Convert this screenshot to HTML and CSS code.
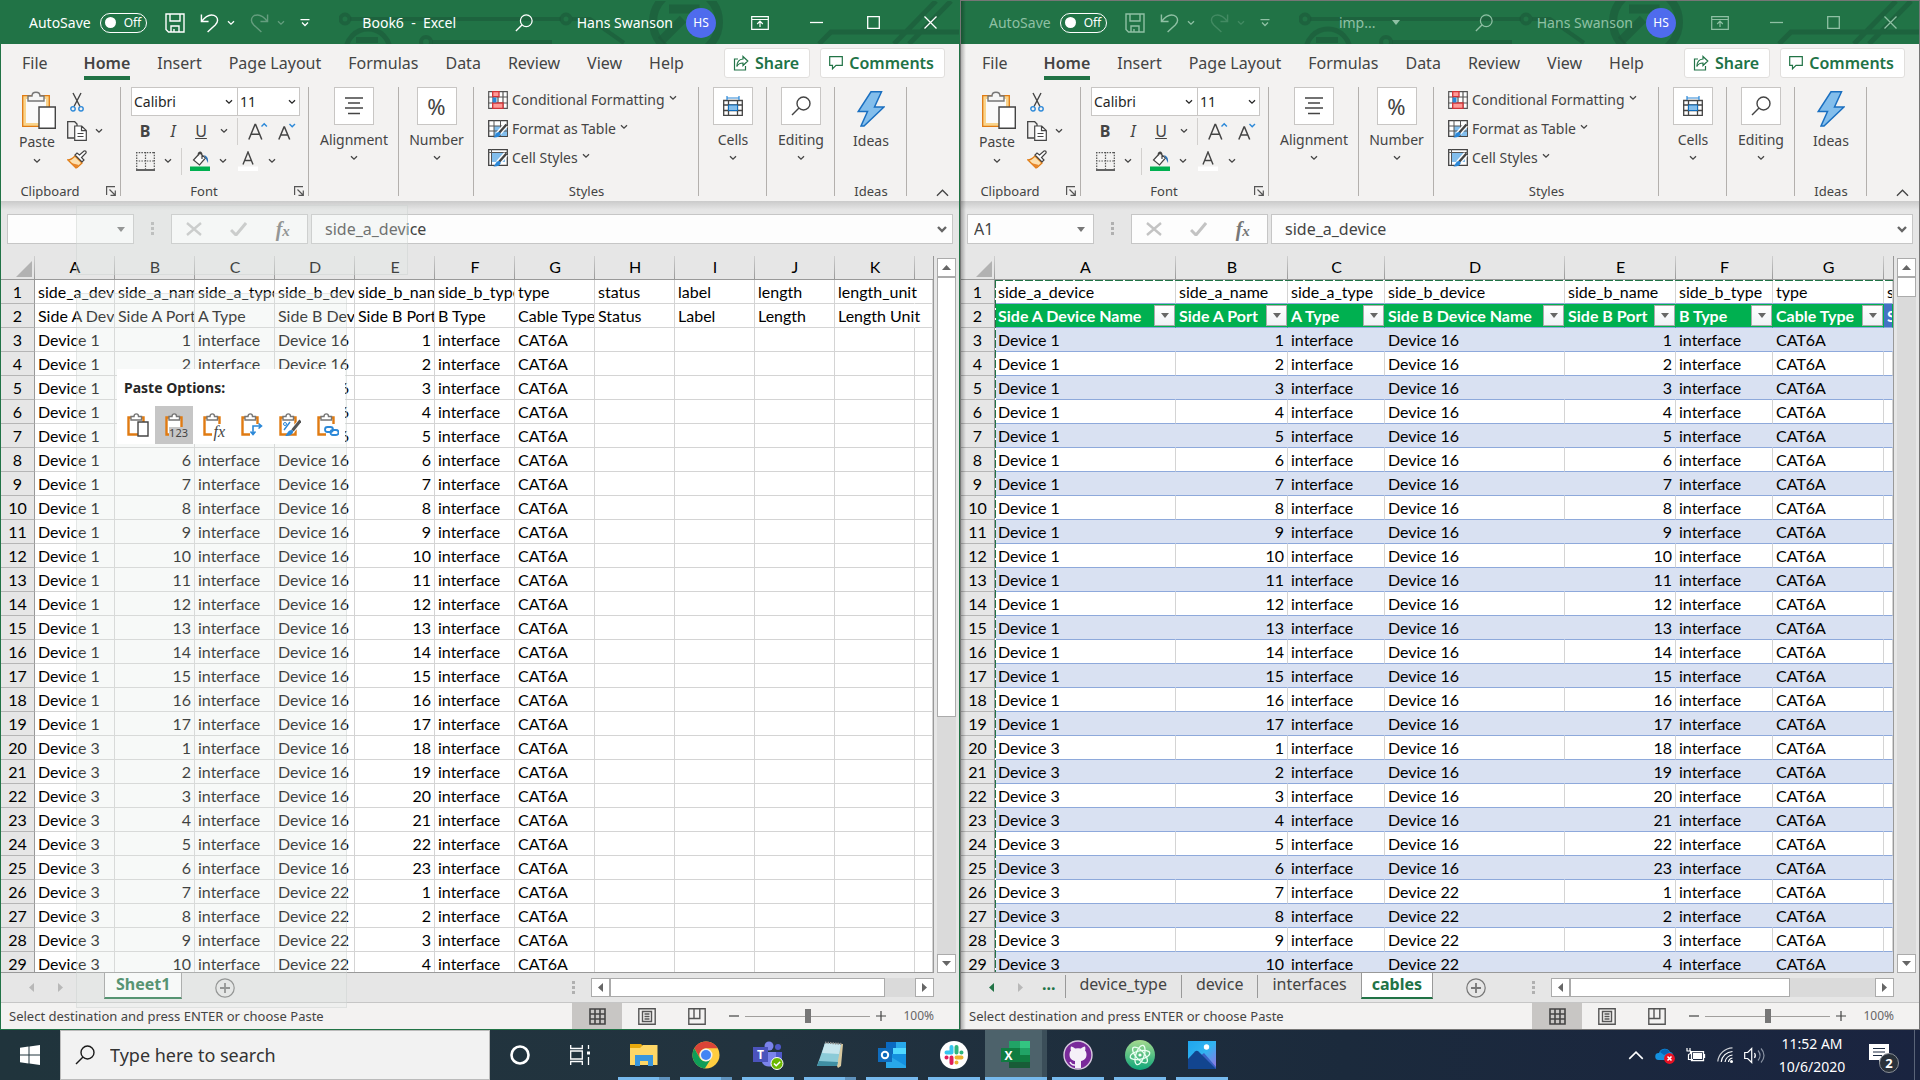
FILE: index.html
```html
<!DOCTYPE html>
<html lang="en">
<head>
<meta charset="utf-8">
<title>Book6 - Excel</title>
<link rel="stylesheet" href="styles.css">
</head>
<body>
<svg class="sprite" aria-hidden="true">
  <symbol id="chev" viewBox="0 0 8 6"><path d="M1 1.2 4 4.2 7 1.2" fill="none" stroke="currentColor" stroke-width="1.3"/></symbol>
  <symbol id="tri" viewBox="0 0 8 5"><path d="M0 0h8L4 5z" fill="currentColor"/></symbol>
  <symbol id="save" viewBox="0 0 20 20"><path d="M1 1h18v18H3.500L1 16.500zM5 1v7h10V1M6 19v-6h8v6M9 16v3" fill="none" stroke="currentColor" stroke-width="1.4"/></symbol>
  <symbol id="undo" viewBox="0 0 20 20"><path d="M1.500 1v7.500H9M1.500 8.500C5 4 8 1.500 12 1.500c4 0 6.500 2.500 6.500 5.500 0 2-1 3.500-2.500 5L8 19.500" fill="none" stroke="currentColor" stroke-width="1.5"/></symbol>
  <symbol id="customize" viewBox="0 0 10 8"><path d="M.5.700h9M2 3.500l3 3 3-3" fill="none" stroke="currentColor" stroke-width="1.3"/></symbol>
  <symbol id="search" viewBox="0 0 20 20"><circle cx="12.500" cy="7.500" r="6.500" fill="none" stroke="currentColor" stroke-width="1.400"/><path d="M8 12 1 19" stroke="currentColor" stroke-width="1.500"/></symbol>
  <symbol id="display" viewBox="0 0 18 14"><path d="M.7.700h16.600v12.600H.700zM.7 3.500h16.600M9 11V5.500M6.200 8 9 5.200 11.800 8" fill="none" stroke="currentColor" stroke-width="1.200"/></symbol>
  <symbol id="share" viewBox="0 0 16 16"><path d="M5 4H1.500v11h11v-4M10 1.500 14.800 6 10 10.500V8C7 8 5 9 3.800 11.500 4 7 6.500 4.300 10 4z" fill="none" stroke="currentColor" stroke-width="1.200"/></symbol>
  <symbol id="comment" viewBox="0 0 14 14"><path d="M.7.700h12.600v8.600H7L3.500 12.800V9.300H.700z" fill="none" stroke="currentColor" stroke-width="1.200"/></symbol>
  <symbol id="paste" viewBox="0 0 34 38">
    <path d="M2 6h24v28H2z" fill="#fafafa" stroke="#f9d48c" stroke-width="4"/><path d="M.700 4.700h26.600v30.600H.700z" fill="none" stroke="#e07b12" stroke-width="1.300"/>
    <path d="M6 10V5h4c0-5 8-5 8 0h4v5z" fill="#f5f5f5" stroke="#767676" stroke-width="1.400"/>
    <path d="M17 16h16.300v21.300H17z" fill="#fff" stroke="#444" stroke-width="1.400"/></symbol>
  <symbol id="cut" viewBox="0 0 14 20"><path d="M3 1l7 13.500M11 1 4 14.500" stroke="#444" stroke-width="1.400"/><circle cx="3" cy="16.800" r="2.200" fill="none" stroke="#2b88d8" stroke-width="1.400"/><circle cx="11" cy="16.800" r="2.200" fill="none" stroke="#2b88d8" stroke-width="1.400"/></symbol>
  <symbol id="copy" viewBox="0 0 20 20"><path d="M7 17H.7V.700h7L10 3v2" fill="none" stroke="#444" stroke-width="1.300"/><path d="M7.700 5h7l4.600 4.500v9.800H7.700zM14.500 5v4.700h4.700M10.500 12.500h6M10.500 15.500h6" fill="#fff" stroke="#444" stroke-width="1.200"/></symbol>
  <symbol id="brush" viewBox="0 0 20 19"><path d="m8 6 7 7c-2 2-4 4-6 5L1 10c3 0 5-2 7-4z" fill="#fce0b0" stroke="#e07b12" stroke-width="1.300"/><path d="m4 13 8 2-3 3z" fill="#e8862a"/><path d="m8 5 7 7 2-2-2.500-2.500L19 3c.5-1.500-.5-2.500-2-2l-4.500 4L10 3z" fill="#fff" stroke="#444" stroke-width="1.200"/></symbol>
  <symbol id="launch" viewBox="0 0 10 10"><path d="M.600 9V.600H9M3.500 3.500l5.500 5.500M9.300 4.500v4.800H4.500" fill="none" stroke="#555" stroke-width="1.200"/></symbol>
  <symbol id="grow" viewBox="0 0 20 18"><path d="M.800 17.500 7 2.500h.600l6.200 15M3 12.200h8.600" fill="none" stroke="#444" stroke-width="1.500"/><path d="m13.500 4.500 2.700-2.700 2.700 2.700" fill="none" stroke="#2b88d8" stroke-width="1.400"/></symbol>
  <symbol id="shrink" viewBox="0 0 20 18"><path d="M1.800 17.500 7 5h.500l5.200 12.500M3.500 13h7.300" fill="none" stroke="#444" stroke-width="1.500"/><path d="m12.500 2 2.700 2.700L18 2" fill="none" stroke="#2b88d8" stroke-width="1.400"/></symbol>
  <symbol id="borders" viewBox="0 0 19 19"><path d="M.700 0v17M9.500 0v17M18.300 0v17M0 .700h19M0 9h19" fill="none" stroke="#555" stroke-width="1.200" stroke-dasharray="1.500 1.200"/><path d="M0 18h19" stroke="#333" stroke-width="1.500"/></symbol>
  <symbol id="fill" viewBox="0 0 20 20"><path d="M10 2 3.500 9l6 5 6-7zM8 5c0-5 4-5 4-1v4" fill="#fff" stroke="#444" stroke-width="1.200"/><path d="M14 4c3 1 4.500 3 4 8l-2-4z" fill="#2b72b8"/><path d="M0 15.500h20V20H0z" fill="#00b050"/></symbol>
  <symbol id="fontcolor" viewBox="0 0 20 20"><path d="M5 13.500 10 1l5 12.500M6.800 9.500h6.400" fill="none" stroke="#444" stroke-width="1.400"/><path d="M0 15.500h20V20H0z" fill="#fff"/></symbol>
  <symbol id="align" viewBox="0 0 18 18"><path d="M0 1h18M3 6h12M0 11h18M3 16.500h12" stroke="#444" stroke-width="1.300"/></symbol>
  <symbol id="condfmt" viewBox="0 0 20 18"><path d="M.700.700h18.600v16.600H.700zM5 0v18M10 0v18M15 0v18M0 6h20M0 12h20" fill="#fff" stroke="#555" stroke-width="1.200"/><path d="M4.700.700H11v5H4.700zM4.700 12H15v5.300H4.700z" fill="#ff9a96" stroke="#d13438" stroke-width="1.300"/><path d="M4.700 6.500h3.800v5H4.700z" fill="#2b88d8"/></symbol>
  <symbol id="fmttable" viewBox="0 0 20 18"><path d="M.700.700h18.600v15.600H.700z" fill="#fff" stroke="#444" stroke-width="1.300"/><path d="M6 6h13v10H6z" fill="#83beec"/><path d="M6 0v16M12.500 0v16M0 6h20M0 11h20" stroke="#555"/><path d="m18 5-8 9" stroke="#fff" stroke-width="5"/><path d="m18.500 4.500-7.500 8.500" stroke="#444" stroke-width="2.400"/><path d="M11 12c2 1 2 2 1 3.500-1.500 2-5 2-7 2 2.500-.5 2-5 6-5.500z" fill="#2b88d8"/></symbol>
  <symbol id="cellstyles" viewBox="0 0 20 18"><path d="M.700.700h18.600v15.600H.700z" fill="#fff" stroke="#444" stroke-width="1.300"/><path d="M4 4h13v9H4z" fill="#83beec"/><path d="M3.500 0v16M0 3.500h20" stroke="#555"/><path d="m18 5-8 9" stroke="#fff" stroke-width="5"/><path d="m18.500 4.500-7.500 8.500" stroke="#444" stroke-width="2.400"/><path d="M11 12c2 1 2 2 1 3.500-1.500 2-5 2-7 2 2.500-.5 2-5 6-5.500z" fill="#2b88d8"/></symbol>
  <symbol id="cells" viewBox="0 0 20 20"><path d="M.700 4.500h18.600v14.800H.700zM5.500 4v16M14.500 4v16M0 9h20M0 14.500h20" fill="none" stroke="#444" stroke-width="1.300"/><path d="M5.500 9h9v5.500h-9z" fill="#83beec" stroke="#106ebe"/><path d="M4 2h12M4 0v4M16 0v4" stroke="#2b88d8" stroke-width="1.200"/></symbol>
  <symbol id="bolt" viewBox="0 0 28 36"><path d="M14 .800h10.500L17.500 16H27L7 35H4l6.500-14.500H1.200z" fill="#83beec" stroke="#1a6fc0" stroke-width="1.500"/></symbol>
  <symbol id="caret" viewBox="0 0 14 8"><path d="m1 7 6-6 6 6" fill="none" stroke="currentColor" stroke-width="1.400"/></symbol>
  <symbol id="plus" viewBox="0 0 20 20"><circle cx="10" cy="10" r="9.200" fill="none" stroke="#777" stroke-width="1.200"/><path d="M10 5v10M5 10h10" stroke="#777" stroke-width="1.800"/></symbol>
  <symbol id="v-normal" viewBox="0 0 17 17"><path d="M1 1h15v15H1zM6 1v15M11 1v15M1 6h15M1 11h15" fill="none" stroke="#444" stroke-width="1.600"/></symbol>
  <symbol id="v-page" viewBox="0 0 18 17"><path d="M.800.800h16.400v15.400H.800zM4.500 3.500h9v10h-9zM6.500 6h5M6.500 8.500h5M6.500 11h5" fill="none" stroke="#555" stroke-width="1.400"/></symbol>
  <symbol id="v-break" viewBox="0 0 18 17"><path d="M.800.800h16.400v15.400H.800zM.800 10.500h11V.800M6 .800v9.700" fill="none" stroke="#555" stroke-width="1.400"/></symbol>
  <symbol id="clip" viewBox="0 0 22 24"><path d="M1.500 4.500h15v17h-15z" fill="#fff" stroke="#e07b12" stroke-width="2.400"/><path d="M4 7V3.500h3C7 0 11.500 0 11.500 3.500h3V7z" fill="#fff" stroke="#767676" stroke-width="1.400"/></symbol>
  <symbol id="clip-fx" viewBox="0 0 22 24"><use href="#clip" width="22" height="24"/><path d="M9 11h13v13H9z" fill="#fff"/></symbol>
</svg>

<main class="desktop" id="desktop"></main>

<template id="window-template">
  <section class="window">
    <header class="titlebar">
      <svg class="circuit" viewBox="0 0 620 43" aria-hidden="true"><g fill="none" stroke="#1b5b3a" stroke-opacity=".65" stroke-width="4">
        <circle cx="6" cy="18" r="4.500"/><path d="M11 18h211M233 18h18l34 24"/><circle cx="227" cy="18" r="4.500"/>
        <circle cx="29" cy="50" r="22" stroke-width="5"/><path d="M17 39h22" stroke-width="6"/><circle cx="87" cy="41" r="5"/><path d="M93 41h120"/>
        <circle cx="347" cy="21" r="33" stroke-width="8"/><path d="m322 40 22-22M330 8h26v26" stroke-width="9"/>
        <path d="m480 43 12-12h128M555 43l42-43M570 43l42-43" stroke-width="5"/></g></svg>
      <label class="autosave">AutoSave<span class="switch"><input type="checkbox">Off</span></label>
      <div class="quick">
        <button class="ico" aria-label="Save"><svg width="20" height="20"><use href="#save"/></svg></button>
        <button class="ico" aria-label="Undo"><svg width="19" height="20"><use href="#undo"/></svg></button>
        <button class="ico near" aria-label="Undo list"><svg width="8" height="6"><use href="#chev"/></svg></button>
        <button class="ico dim" aria-label="Redo"><svg class="flip" width="19" height="20"><use href="#undo"/></svg></button>
        <button class="ico near dim" aria-label="Redo list"><svg width="8" height="6"><use href="#chev"/></svg></button>
        <button class="ico" aria-label="Customize toolbar"><svg width="10" height="8"><use href="#customize"/></svg></button>
      </div>
      <h1 class="doc"></h1>
      <button class="ico" aria-label="Search"><svg width="18" height="18"><use href="#search"/></svg></button>
      <span class="user">Hans Swanson</span>
      <span class="avatar">HS</span>
      <div class="winbtns">
        <button class="ico" aria-label="Ribbon display options"><svg width="18" height="14"><use href="#display"/></svg></button>
        <button class="ico" aria-label="Minimize"><svg width="13" height="13" viewBox="0 0 13 13"><path d="M0 6.500h13" stroke="currentColor" stroke-width="1.300"/></svg></button>
        <button class="ico" aria-label="Maximize"><svg width="13" height="13" viewBox="0 0 13 13"><path d="M.700.700h11.600v11.600H.700z" fill="none" stroke="currentColor" stroke-width="1.300"/></svg></button>
        <button class="ico" aria-label="Close"><svg width="13" height="13" viewBox="0 0 13 13"><path d="m.5.500 12 12M12.500.500l-12 12" stroke="currentColor" stroke-width="1.300"/></svg></button>
      </div>
    </header>

    <nav class="tabs">
      <a class="file" href="#">File</a><a class="on" href="#">Home</a><a href="#">Insert</a><a href="#">Page Layout</a><a href="#">Formulas</a><a href="#">Data</a><a href="#">Review</a><a href="#">View</a><a href="#">Help</a>
      <div class="collab">
        <button><svg width="16" height="16"><use href="#share"/></svg>Share</button>
        <button><svg width="14" height="14"><use href="#comment"/></svg>Comments</button>
      </div>
    </nav>

    <div class="ribbon">
      <div class="group g-clip">
        <div class="body">
          <button class="big paste"><svg width="34" height="38"><use href="#paste"/></svg><span>Paste</span><svg width="8" height="6"><use href="#chev"/></svg></button>
          <div class="stack">
            <button aria-label="Cut"><svg class="cut" width="14" height="20"><use href="#cut"/></svg></button>
            <button aria-label="Copy"><svg width="20" height="20"><use href="#copy"/></svg><svg width="8" height="6"><use href="#chev"/></svg></button>
            <button aria-label="Format Painter"><svg width="20" height="19"><use href="#brush"/></svg></button>
          </div>
        </div>
        <div class="caption">Clipboard<button aria-label="Clipboard settings"><svg width="10" height="10"><use href="#launch"/></svg></button></div>
      </div>
      <div class="group g-font">
        <div class="fontrows">
          <div class="combos">
            <label class="combo name"><select aria-label="Font"><option>Calibri</option></select><svg width="8" height="6"><use href="#chev"/></svg></label>
            <label class="combo size"><select aria-label="Font size"><option>11</option></select><svg width="8" height="6"><use href="#chev"/></svg></label>
          </div>
          <div class="tools">
            <button class="t"><b>B</b></button><button class="t"><i>I</i></button><button class="t"><u>U</u></button>
            <button class="c" aria-label="Underline list"><svg width="8" height="6"><use href="#chev"/></svg></button><span class="sep"></span>
            <button class="t wide" aria-label="Grow font"><svg width="20" height="18"><use href="#grow"/></svg></button><button class="t" aria-label="Shrink font"><svg width="20" height="18"><use href="#shrink"/></svg></button>
          </div>
          <div class="tools">
            <button class="t" aria-label="Borders"><svg width="19" height="19"><use href="#borders"/></svg></button><button class="c" aria-label="Borders list"><svg width="8" height="6"><use href="#chev"/></svg></button><span class="sep"></span>
            <button class="t" aria-label="Fill color"><svg width="20" height="20"><use href="#fill"/></svg></button><button class="c" aria-label="Fill list"><svg width="8" height="6"><use href="#chev"/></svg></button>
            <button class="t wide" aria-label="Font color"><svg width="20" height="20"><use href="#fontcolor"/></svg></button><button class="c" aria-label="Font color list"><svg width="8" height="6"><use href="#chev"/></svg></button>
          </div>
        </div>
        <div class="caption">Font<button aria-label="Font settings"><svg width="10" height="10"><use href="#launch"/></svg></button></div>
      </div>
      <div class="group g-align"><button class="big boxed"><span class="box"><svg width="18" height="18"><use href="#align"/></svg></span><span>Alignment</span><svg width="8" height="6"><use href="#chev"/></svg></button></div>
      <div class="group g-num"><button class="big boxed"><span class="box pct">%</span><span>Number</span><svg width="8" height="6"><use href="#chev"/></svg></button></div>
      <div class="group g-styles">
        <div class="list">
          <button><svg width="20" height="18"><use href="#condfmt"/></svg>Conditional Formatting<svg class="dn" width="8" height="6"><use href="#chev"/></svg></button>
          <button><svg width="20" height="18"><use href="#fmttable"/></svg>Format as Table<svg class="dn" width="8" height="6"><use href="#chev"/></svg></button>
          <button><svg width="20" height="18"><use href="#cellstyles"/></svg>Cell Styles<svg class="dn" width="8" height="6"><use href="#chev"/></svg></button>
        </div>
        <div class="caption">Styles</div>
      </div>
      <div class="group g-sm"><button class="big boxed"><span class="box"><svg width="20" height="20"><use href="#cells"/></svg></span><span>Cells</span><svg width="8" height="6"><use href="#chev"/></svg></button></div>
      <div class="group g-sm"><button class="big boxed"><span class="box"><svg width="20" height="20"><use href="#search"/></svg></span><span>Editing</span><svg width="8" height="6"><use href="#chev"/></svg></button></div>
      <div class="group g-ideas"><button class="big ideas"><svg width="28" height="38"><use href="#bolt"/></svg><span>Ideas</span></button><div class="caption">Ideas</div></div>
      <button class="collapse" aria-label="Collapse ribbon"><svg width="13" height="8"><use href="#caret"/></svg></button>
    </div>

    <div class="formulabar">
      <label class="namebox"><input type="text" class="cellref" aria-label="Name box"><svg width="8" height="5"><use href="#tri"/></svg></label>
      <span class="grip"></span>
      <div class="fxbox">
        <button aria-label="Cancel"><svg width="16" height="14" viewBox="0 0 16 14"><path d="m1 1 14 12M15 1 1 13" stroke="#c3c3c3" stroke-width="2.400"/></svg></button>
        <button aria-label="Enter"><svg width="17" height="14" viewBox="0 0 17 14"><path d="m1 8 5 5L16 1" fill="none" stroke="#c3c3c3" stroke-width="3"/></svg></button>
        <button class="fx" aria-label="Insert function"><i>f</i><i class="x">x</i></button>
      </div>
      <label class="formula"><input type="text" value="side_a_device" aria-label="Formula"><svg width="10" height="7" viewBox="0 0 10 7"><path d="m1 1 4 4 4-4" fill="none" stroke="#666" stroke-width="2.400"/></svg></label>
    </div>

    <div class="sheet">
      <div class="cells"><table><colgroup></colgroup><thead></thead><tbody></tbody></table></div>
      <div class="vscroll"><button aria-label="Scroll up"><svg width="9" height="5" viewBox="0 0 9 5"><path d="M0 5 4.500 0 9 5z"/></svg></button><div class="track"><div class="thumb"></div></div><button aria-label="Scroll down"><svg width="9" height="5" viewBox="0 0 9 5"><path d="M0 0h9L4.500 5z"/></svg></button></div>
    </div>

    <div class="sheetbar">
      <button class="nav prev" aria-label="Previous sheet"><svg width="5" height="9" viewBox="0 0 5 9"><path d="M5 0v9L0 4.500z"/></svg></button>
      <button class="nav next" aria-label="Next sheet"><svg width="5" height="9" viewBox="0 0 5 9"><path d="M0 0v9l5-4.500z"/></svg></button>
      <div class="sheets"></div>
      <button class="add" aria-label="New sheet"><svg width="20" height="20"><use href="#plus"/></svg></button>
      <span class="grip"></span>
      <div class="hscroll"><button aria-label="Scroll left"><svg width="5" height="9" viewBox="0 0 5 9"><path d="M5 0v9L0 4.500z"/></svg></button><div class="track"><div class="thumb"></div></div><button aria-label="Scroll right"><svg width="5" height="9" viewBox="0 0 5 9"><path d="M0 0v9l5-4.500z"/></svg></button></div>
    </div>

    <footer class="status">
      <span class="msg">Select destination and press ENTER or choose Paste</span>
      <button class="view on" aria-label="Normal"><svg width="17" height="17"><use href="#v-normal"/></svg></button>
      <button class="view" aria-label="Page Layout"><svg width="18" height="17"><use href="#v-page"/></svg></button>
      <button class="view" aria-label="Page Break Preview"><svg width="18" height="17"><use href="#v-break"/></svg></button>
      <button class="z" aria-label="Zoom out"><svg width="10" height="10" viewBox="0 0 10 10"><path d="M0 5h10" stroke="#444" stroke-width="1.200"/></svg></button>
      <input type="range" min="0" max="200" value="100" aria-label="Zoom">
      <button class="z" aria-label="Zoom in"><svg width="10" height="10" viewBox="0 0 10 10"><path d="M0 5h10M5 0v10" stroke="#444" stroke-width="1.200"/></svg></button>
      <span class="pct100">100%</span>
    </footer>
  </section>
</template>

<template id="paste-template">
  <div class="ghost top"></div>
  <div class="ghost"></div>
  <div class="pastemenu" role="menu">
    <h2>Paste Options:</h2>
    <div class="opts">
      <button aria-label="Paste"><svg width="22" height="24" viewBox="0 0 22 24"><use href="#clip" width="22" height="24"/><path d="M11 9h10v14H11z" fill="#fff" stroke="#444" stroke-width="1.400"/></svg></button>
      <button class="on" aria-label="Values"><svg width="22" height="24"><use href="#clip"/></svg><span class="badge">123</span></button>
      <button aria-label="Formulas"><svg width="22" height="24"><use href="#clip-fx"/></svg><span class="badge it">fx</span></button>
      <button aria-label="Transpose"><svg width="22" height="24" viewBox="0 0 22 24"><use href="#clip-fx" width="22" height="24"/><path d="M12 21v-8h8M9.500 18.500 12 21.500l2.500-3M17.500 10.500l3 2.500-3 2.500" fill="none" stroke="#2b88d8" stroke-width="1.600"/></svg></button>
      <button aria-label="Formatting"><svg width="22" height="24" viewBox="0 0 22 24"><use href="#clip" width="22" height="24"/><path d="M5 17 11 9" stroke="#2b88d8" stroke-width="1.400"/><circle cx="6" cy="11" r="1.500" fill="none" stroke="#2b88d8"/><path d="M21 9 12 19" stroke="#fff" stroke-width="5"/><path d="m21.500 7.500-8 10" stroke="#555" stroke-width="3"/><path d="M13 17c2 1 1 3 0 4-2 2-5 2-7 2 2-1 2-6 7-6z" fill="#2b88d8"/></svg></button>
      <button aria-label="Paste link"><svg width="22" height="24" viewBox="0 0 22 24"><use href="#clip-fx" width="22" height="24"/><g fill="none" stroke="#2b88d8" stroke-width="1.800"><rect x="8" y="14" width="8" height="5" rx="2.500"/><rect x="13.500" y="17" width="8" height="5" rx="2.500"/></g></svg></button>
    </div>
  </div>
</template>

<footer class="taskbar">
  <button class="start" aria-label="Start"><svg width="20" height="20" viewBox="0 0 20 20"><path d="M0 2.800 8.500 1.500v8H0zM9.500 1.400 20 0v9.500H9.500zM0 10.500h8.500v8L0 17.200zM9.500 10.500H20V20L9.500 18.600z" fill="#fff"/></svg></button>
  <label class="tsearch"><svg width="20" height="20"><use href="#search"/></svg><input type="text" placeholder="Type here to search" aria-label="Search Windows"></label>
  <button class="slot" aria-label="Cortana"><svg width="20" height="20" viewBox="0 0 20 20"><circle cx="10" cy="10" r="8.500" fill="none" stroke="#fff" stroke-width="2.600"/></svg></button>
  <button class="slot view" aria-label="Task View"><svg width="20" height="20" viewBox="0 0 20 20"><path d="M.700 0v3.500h11.600V0M.700 20v-3.500h11.600V20M.700 6h11.600v8H.700zM18.500 0v4M18.500 12v8" fill="none" stroke="#fff" stroke-width="1.300"/><path d="M17 6.500h3v3h-3z" fill="#fff"/></svg></button>
  <div class="apps">
    <button class="app multi" aria-label="File Explorer"><svg width="28" height="24" viewBox="0 0 28 24"><path d="M0 1h11l2 2h14v19H0z" fill="#e8a80c"/><path d="M0 5h10l3-3h14.500v20H0z" fill="#ffd766"/><path d="M5 12h18v11h-5v-5h-8v5H5z" fill="#3a96dd"/></svg></button>
    <button class="app multi" aria-label="Chrome"><svg width="28" height="28" viewBox="0 0 28 28"><circle cx="14" cy="14" r="13.500" fill="#ffcd40"/><path d="M2.300 7.200A13.500 13.500 0 0 1 25.700 7.200H14a7 7 0 0 0-6 10z" fill="#db4437"/><path d="M2.300 7.200a13.500 13.500 0 0 0 10.500 20.300l6-9.500a7 7 0 0 1-10.800-.500z" fill="#0f9d58"/><circle cx="14" cy="14" r="6.500" fill="#f1f1f1"/><circle cx="14" cy="14" r="5" fill="#4285f4"/></svg></button>
    <button class="app" aria-label="Teams"><svg width="32" height="30" viewBox="0 0 32 30"><circle cx="17" cy="6" r="4.500" fill="#7b83eb"/><circle cx="26" cy="7" r="3" fill="#5059c9"/><path d="M20 12h10v8c0 3-3 5-6 5z" fill="#5059c9"/><path d="M10 12h14v10c0 5-12 7-14 0z" fill="#7b83eb"/><path d="M1 7h15v15H1z" fill="#4b53bc"/><text x="8.500" y="18.500" class="mark">T</text><circle cx="25" cy="23.500" r="6" fill="#6bb700" stroke="#fff"/><path d="m22 23.500 2.200 2.200 4-4" fill="none" stroke="#fff" stroke-width="1.600"/></svg></button>
    <button class="app multi" aria-label="Notepad"><svg width="28" height="28" viewBox="0 0 28 28"><path d="m9 2 18 1-2 22-3 2z" fill="#d8c9a0"/><path d="m9 2 16 1-4 22H1z" fill="#8ccbd8"/><path d="m9 2 16 1-2 10L6 12z" fill="#c8e6ee"/><path d="M9 1.500 26 3" stroke="#888" stroke-width="2" stroke-dasharray="1.500 1"/><path d="m3 20 19 1-1 4H1z" fill="#3f8fa3"/></svg></button>
    <button class="app" aria-label="Outlook"><svg width="30" height="28" viewBox="0 0 30 28"><path d="M9 1h20v12H9z" fill="#0a6ac2"/><path d="M19 1h10v6H19z" fill="#28a8ea"/><path d="M16 7h13v6H16z" fill="#50d9ff"/><path d="M9 13h20v14H9z" fill="#1490df"/><path d="m9 13 20 12v2H9z" fill="#28a8ea"/><path d="M1 7h14v14H1z" fill="#0f6cbd"/><circle cx="8" cy="14" r="3.200" fill="none" stroke="#fff" stroke-width="2"/></svg></button>
    <button class="app" aria-label="Slack"><svg width="28" height="28" viewBox="0 0 28 28"><circle cx="14" cy="14" r="14" fill="#fff"/><g stroke-width="4" stroke-linecap="round"><path d="M11.500 6v5.500M6.500 11.500h5" stroke="#36c5f0"/><path d="M16.500 6v5.500M21.500 11.500h-.100" stroke="#2eb67d"/><path d="M16.500 16.500h5M16.500 21.500v-.100" stroke="#ecb22e"/><path d="M11.500 16.500V22M6.500 16.500h.100" stroke="#e01e5a"/></g></svg></button>
    <button class="app on" aria-label="Excel"><svg width="30" height="28" viewBox="0 0 30 28"><path d="M8 0h11v7H8z" fill="#21a366"/><path d="M19 0h10v7H19z" fill="#33c481"/><path d="M8 7h11v7H8z" fill="#107c41"/><path d="M19 7h10v7H19z" fill="#21a366"/><path d="M8 14h21v7H8z" fill="#107c41"/><path d="M8 21h21v6H8z" fill="#185c37"/><path d="M0 7h15v14H0z" fill="#107c41"/><text x="7.500" y="18.500" class="mark">X</text></svg></button>
    <button class="app" aria-label="GitHub Desktop"><svg width="30" height="30" viewBox="0 0 30 30"><circle cx="15" cy="15" r="14" fill="#7a2a9a" stroke="#d8cbe0" stroke-width="1.400"/><path d="M8 6.500c1.500 0 3 1 4 2a14 14 0 0 1 6 0c1-1 2.500-2 4-2 .500 1.500.500 3 0 4 1 1 1.500 2.500 1.500 4 0 4-2.500 6-5.500 6.500v7h-6v-7C9 20.500 6.500 18.500 6.500 14.500c0-1.500.5-3 1.500-4-.5-1-.5-2.500 0-4z" fill="#f5f0f8"/><path d="M12 25c-3 .5-4-1-5-3" fill="none" stroke="#f5f0f8" stroke-width="1.500"/></svg></button>
    <button class="app" aria-label="Atom"><svg width="30" height="30" viewBox="0 0 30 30"><defs><linearGradient id="atomg" x2="0" y2="1"><stop stop-color="#a5da8f"/><stop offset="1" stop-color="#0fa67a"/></linearGradient></defs><circle cx="15" cy="15" r="15" fill="url(#atomg)"/><g fill="none" stroke="#eafff2" stroke-width="1.300"><ellipse cx="15" cy="15" rx="10" ry="4.200" transform="rotate(-12 15 15)"/><ellipse cx="15" cy="15" rx="10" ry="4.200" transform="rotate(48 15 15)"/><ellipse cx="15" cy="15" rx="10" ry="4.200" transform="rotate(108 15 15)"/></g><circle cx="15" cy="15" r="1.600" fill="#fff"/></svg></button>
    <button class="app" aria-label="Photos"><svg width="28" height="28" viewBox="0 0 28 28"><defs><linearGradient id="sky" x2="1" y2="1"><stop stop-color="#1fa5ee"/><stop offset=".5" stop-color="#31b4f0"/><stop offset="1" stop-color="#9a6fe0"/></linearGradient></defs><path d="M0 0h28v28H0z" fill="url(#sky)"/><path d="m8 18 8-6 12 14v2H8z" fill="#3a62c4"/><path d="M0 18 7 10.500c1-1 2.500-1 3.500 0L28 28H0z" fill="#12458f"/><circle cx="18.500" cy="6" r="2.700" fill="#fff"/></svg></button>
  </div>
  <div class="tray">
    <button aria-label="Show hidden icons"><svg width="16" height="9"><use href="#caret"/></svg></button>
    <button aria-label="OneDrive"><svg width="20" height="17" viewBox="0 0 20 17"><path d="M3.500 13a3.500 3.500 0 0 1 .5-7 6 6 0 0 1 11-1c3 .5 4 3 3 8z" fill="#1490df"/><path d="M5 5a6 6 0 0 1 10 0l-6 3z" fill="#0364b8"/><circle cx="14.500" cy="11.500" r="5.400" fill="#e81123"/><path d="m12.500 9.500 4 4M16.500 9.500l-4 4" stroke="#fff" stroke-width="1.600"/></svg></button>
    <button aria-label="Battery"><svg width="20" height="14" viewBox="0 0 20 14"><path d="M5.500 3.600h12v9h-12zM18.500 6v4" fill="none" stroke="#fff" stroke-width="1.300"/><path d="M7 5h9v6H7z" fill="#fff"/><path d="M1 0v3M4 0v3M.500 3h4v2.500l-2 1v5H7" fill="none" stroke="#fff" stroke-width="1.200"/></svg></button>
    <button aria-label="Network"><svg width="16" height="16" viewBox="0 0 16 16"><g fill="none" stroke="#fff" stroke-width="1.200"><path d="M.8 14.500C1.500 7 8 1 15.500.800" opacity=".8"/><path d="M4.200 14.800C5 9 9.500 5 15.500 4.500M8 15c.5-3.500 3.500-6.500 7.500-7M11.500 15c.2-2 2-3.600 4-4"/></g><circle cx="14.500" cy="14.500" r="1.500" fill="#fff"/></svg></button>
    <button aria-label="Volume"><svg width="21" height="17" viewBox="0 0 21 17"><path d="M.7 5.500h3l4-4v14l-4-4h-3zM10.500 6c1 1.500 1 3.500 0 5" fill="none" stroke="#fff" stroke-width="1.200"/><path d="M14 3.500c2.500 3 2.500 7 0 10M17 1.500c4 4 4 10 0 14" fill="none" stroke="#8a93a3" stroke-width="1.200"/></svg></button>
    <div class="clock"><span>11:52 AM</span><span>10/6/2020</span></div>
    <button class="action" aria-label="Notifications"><svg width="30" height="30" viewBox="0 0 30 30"><path d="M0 1h20v16h-6l-4 4v-4H0z" fill="#fff"/><path d="M4 5.500h12M4 9h12M4 12.500h9" stroke="#1b2940" stroke-width="1.200"/><circle cx="20" cy="20" r="9.500" fill="#2a323b" stroke="#8a8f96"/><text x="20" y="24.500" class="count">2</text></svg></button>
  </div>
</footer>
<script src="app.js"></script>
</body>
</html>
```
FILE: styles.css
```css
* { box-sizing: border-box; }
body { margin: 0; height: 100vh; display: flex; flex-direction: column; overflow: hidden; background: #1d2d3c; font: 14px/20px "Noto Sans", "Open Sans", sans-serif; color: #444; }
button, input, select { font: inherit; color: inherit; }
button { border: 0; background: none; padding: 0; display: flex; align-items: center; justify-content: center; }
svg { display: block; flex: none; }
h1, h2 { margin: 0; font: inherit; }
a { color: inherit; text-decoration: none; }
.sprite { position: absolute; width: 0; height: 0; }

.desktop { flex: 1; min-height: 0; display: grid; grid-template-columns: 1fr 1fr; }
.window { position: relative; display: flex; flex-direction: column; min-width: 0; min-height: 0; overflow: hidden; border: 1px solid #217346; background: #e6e6e6; }
.window.inactive { border-color: #767676; }
.window.inactive::before { content: ""; position: absolute; z-index: 5; inset: 0 auto 0 0; width: 5px; background: linear-gradient(to right, rgba(0,0,0,.28), rgba(0,0,0,0)); }

/* title bar */
.titlebar { position: relative; height: 43px; flex: none; display: flex; align-items: center; padding-left: 28px; background: #217346; color: #fff; }
.titlebar > * { position: relative; }
.titlebar .circuit { position: absolute; right: 0; top: 0; width: 620px; height: 43px; }
.autosave { display: flex; align-items: center; gap: 9px; }
.switch { display: flex; align-items: center; gap: 8px; width: 47px; height: 20px; padding-left: 4px; border: 1px solid #fff; border-radius: 10px; color: #fff; font-size: 12px; }
.switch input { appearance: none; width: 11px; height: 11px; margin: 0; border-radius: 50%; background: #fff; }
.quick { display: flex; align-items: center; margin-left: 18px; gap: 15px; }
.quick .near { margin-left: -7px; }
.dim { opacity: .3; }
.flip { transform: scaleX(-1); }
.doc { flex: 1; display: flex; align-items: center; justify-content: center; gap: 16px; margin-right: 6px; white-space: pre; }
.user { margin: 0 13px 0 44px; }
.avatar { width: 30px; height: 30px; border-radius: 50%; background: #4f6bed; color: #fff; font-size: 12px; line-height: 30px; text-align: center; }
.winbtns { display: flex; margin-left: 15px; }
.winbtns button { width: 57px; height: 43px; }
.inactive .titlebar { color: #8fc0a4; }

/* ribbon tabs */
.tabs { height: 40px; flex: none; display: flex; align-items: center; gap: 27px; padding: 0 14px 2px 21px; background: #f3f2f1; font-size: 16px; white-space: nowrap; }
.tabs a { line-height: 26px; border-bottom: 4px solid transparent; margin-top: 4px; }
.tabs .file { margin-right: 9px; }
.tabs .on { font-weight: 600; border-color: #217346; }
.collab { display: flex; gap: 10px; margin-left: auto; }
.collab button { height: 30px; gap: 6px; padding: 0 10px 0 8px; background: #fff; border: 1px solid #e1dfdd; border-radius: 3px; color: #217346; font-weight: 600; }

/* ribbon */
.ribbon { height: 117px; flex: none; display: flex; padding-top: 3px; background: #f3f2f1; }
.group { flex: none; display: flex; flex-direction: column; height: 114px; background: linear-gradient(#b3b0ad, #b3b0ad) right top / 1px 109px no-repeat; }
.g-clip { width: 120px; }
.g-font { width: 188px; }
.g-align { width: 90px; }
.g-num { width: 75px; }
.g-styles { width: 225px; }
.g-sm { width: 68px; }
.g-ideas { width: 72px; }
.caption { margin-top: auto; display: flex; justify-content: center; align-items: center; position: relative; font-size: 13px; line-height: 20px; }
.caption button { position: absolute; right: 5px; top: 5px; }
.g-clip .caption { padding-right: 22px; }
.g-font .caption { padding-right: 22px; }
.body { display: flex; }
.big { flex-direction: column; justify-content: flex-start; }
.paste { width: 44px; margin-left: 14px; padding-top: 4px; }
.paste > svg:first-child { margin-left: 4px; }
.big > span:not(.box) { margin: 3px 0 6px; }
.boxed > span:not(.box) { margin: 5px 0; }
.ideas { padding-top: 3px; }
.box { width: 40px; height: 38px; display: flex; align-items: center; justify-content: center; background: #fff; border: 1px solid #c8c6c4; }
.pct { font-size: 22px; }
.stack { display: grid; grid-template-rows: 29px 29px 29px; margin-left: 8px; }
.stack button { justify-content: flex-start; gap: 8px; }
.stack .cut { margin-left: 3px; }
.fontrows { padding-left: 10px; }
.combos { display: flex; }
.combo { display: flex; align-items: center; height: 29px; background: #fff; border: 1px solid #c8c6c4; padding-right: 4px; color: #262626; }
.combo select { flex: 1; min-width: 0; appearance: none; border: 0; background: none; padding: 0 2px; }
.combo.name { width: 107px; }
.combo.size { width: 62px; border-left: 0; padding-right: 3px; }
.tools { display: flex; align-items: center; height: 30px; }
.tools .t { width: 28px; height: 28px; font-size: 16px; }
.tools .wide { width: 31px; }
.tools .c { width: 18px; height: 28px; }
.tools .sep { width: 1px; height: 27px; margin: 0 4px; background: #d2d0ce; }
.list { padding-left: 14px; margin-top: -2px; }
.list button { height: 29px; gap: 4px; }
.list .dn { margin-bottom: 4px; }
.collapse { margin: auto 10px 4px auto; }

/* formula bar */
.formulabar { height: 55px; flex: none; display: flex; padding: 13px 6px 12px; background: linear-gradient(#cacaca, #e6e6e6 9px); font-size: 16px; }
.namebox, .fxbox, .formula { display: flex; align-items: center; height: 30px; background: #fdfdfd; border: 1px solid #c6c6c6; }
.namebox { width: 127px; padding-right: 8px; color: #777; }
.namebox input, .formula input { flex: 1; min-width: 0; border: 0; background: none; padding: 0 6px; color: #444; outline: 0; }
.grip { width: 3px; height: 13px; background: repeating-linear-gradient(#b0b0b0 0 3px, transparent 3px 5px); }
.formulabar .grip { margin: 8px 17px; }
.fxbox { width: 137px; margin-right: 3px; padding-right: 3px; justify-content: space-around; }
.fx { font: bold 20px/24px "Liberation Serif", serif; color: #777; }
.fx .x { font-size: 15px; padding-top: 4px; }
.formula { flex: 1; padding-right: 5px; }
.formula input { padding-left: 13px; }

/* sheet */
.sheet { flex: 1; min-height: 0; display: flex; }
.cells { position: relative; flex: 1; min-width: 0; overflow: hidden; border-bottom: 1px solid #999; border-right: 1px solid #999; }
table { width: 100%; table-layout: fixed; border-spacing: 0; font: 16px/23px Lato, "Noto Sans", sans-serif; color: #000; background: #fff; }
col { width: 80px; }
.c-head { width: 34px; }
.c-181 { width: 181px; }
.c-112 { width: 112px; }
.c-111 { width: 111px; }
.c-97 { width: 97px; }
.c-180 { width: 180px; }
.c-rest { width: auto; }
td, th { height: 24px; padding: 0 3px; border-right: 1px solid #d4d4d4; border-bottom: 1px solid #d4d4d4; overflow: hidden; white-space: nowrap; text-align: left; font-weight: 400; }
.spill { border-right-color: transparent; overflow: visible; }
.n { text-align: right; }
thead th { padding: 0 0 2px; line-height: 21px; border-right: 0; border-bottom-color: #999; text-align: center; background: linear-gradient(#d0d0d0, #999) right / 1px 100% no-repeat #e6e6e6; }
thead th:last-child { background: #e6e6e6; }
tbody th { padding: 0; text-align: center; background: #e6e6e6; border-right-color: #999; border-bottom-color: #b5b5b5; }
.corner svg { margin: 5px 3px 0 auto; }
.banded td { border-bottom-color: #8ea9db; }
.banded tr.band td { background: #d9e1f2; border-right-color: #d9e1f2; }
.banded tr.heads td { position: relative; background: #00b050; border-right-color: #00b050; color: #fff; font-weight: 700; }
.banded tr.heads td:last-child { background: #4472c4; }
.filter { position: absolute; right: 0; top: 1px; width: 21px; height: 21px; background: linear-gradient(#fff, #f0f2f6); border: 1px solid #ababab; color: #666; }
.ants { position: absolute; inset: 24px 0 0 34px; pointer-events: none; background: repeating-linear-gradient(to right, #217346 0 8px, #fff 8px 10px) top / 100% 1px no-repeat, repeating-linear-gradient(#217346 0 8px, #fff 8px 10px) left / 1px 100% no-repeat; }

/* scroll bars */
.vscroll { display: flex; flex-direction: column; width: 19px; margin: 2px 3px 0 3px; }
.hscroll { display: flex; width: 343px; height: 19px; margin: 5px 25px 0 16px; }
.vscroll button, .hscroll button { width: 19px; height: 19px; flex: none; background: #fff; border: 1px solid #ababab; fill: #666; }
.track { flex: 1; background: #dadada; }
.thumb { background: #fff; border: 1px solid #ababab; }
.vscroll .thumb { height: 65%; }
.hscroll .thumb { width: 90%; height: 100%; }
.inactive .vscroll .thumb { height: 3%; }
.inactive .hscroll .thumb { width: 72%; }

/* sheet tabs */
.sheetbar { height: 30px; flex: none; display: flex; border-bottom: 1px solid #c6c6c6; font-size: 16px; }
.nav { height: 29px; fill: #b8b8b8; }
.prev { margin-left: 28px; }
.next { margin-left: 24px; }
.inactive .prev { fill: #217346; }
.sheets { display: flex; margin-left: 41px; }
.sheets a { height: 23px; line-height: 19px; padding: 0 14px; margin-top: 2px; border-left: 1px solid #999; }
.sheets .more { padding: 0 9px 0 0; border: 0; color: #217346; font-weight: 700; }
.inactive .sheets { margin-left: 19px; }
.sheets .on { height: 26px; margin: 0; padding: 0 11px; line-height: 22px; background: #fff; border-right: 1px solid #999; border-bottom: 2px solid #217346; color: #217346; font-weight: 700; }
.inactive .sheets .on { padding: 0 10px; }
.add { height: 29px; margin: 0 auto 0 33px; }
.sheetbar .grip { margin-top: 8px; }

/* status bar */
.status { height: 26px; flex: none; display: flex; align-items: center; padding: 0 25px 0 8px; background: #f3f2f1; font-size: 12px; }
.msg { flex: 1; font-size: 13px; }
.view { width: 50px; height: 26px; }
.status .on { background: #c8c6c4; }
.z { height: 26px; margin: 0 6px; }
.status .view + .z { margin-left: 7px; }
.status input { appearance: none; width: 125px; height: 15px; margin: 0; background: linear-gradient(#a19f9d, #a19f9d) center / 100% 1px no-repeat; }
.status input::-webkit-slider-thumb { appearance: none; width: 6px; height: 14px; background: #767676; }
.pct100 { width: 42px; text-align: right; color: #666; }

/* fading paste toolbar over the first window */
.ghost { position: absolute; z-index: 2; left: 75px; top: 292px; bottom: 21px; width: 271px; background: rgba(226, 234, 231, .28); border: 1px solid rgba(200, 205, 203, .4); pointer-events: none; }
.ghost.top { top: 204px; bottom: auto; width: 332px; height: 70px; }
.pastemenu { position: absolute; z-index: 3; left: 116px; top: 368px; width: 228px; background: #fff; color: #262626; }
.pastemenu h2 { padding: 9px 7px 8px; font-weight: 700; }
.opts { display: flex; }
.opts button { position: relative; width: 38px; height: 38px; padding-left: 3px; }
.opts .on { background: #c6c6c6; }
.badge { position: absolute; right: 5px; bottom: 5px; font-size: 11px; line-height: 12px; color: #444; }
.on .badge { background: #c6c6c6; }
.badge.it { right: 6px; font: italic 16px/14px "Liberation Serif", serif; }

/* taskbar */
.taskbar { height: 50px; flex: none; display: flex; background: linear-gradient(to right, #20343c, #22333f 40%, #1b2a3c 70%, #1a2440); color: #fff; }
.start { width: 60px; }
.tsearch { width: 430px; display: flex; align-items: center; gap: 13px; padding: 0 14px; background: #f2f2f2; border: 1px solid #bbb; color: #1a1a1a; font-size: 18px; }
.tsearch input { flex: 1; min-width: 0; border: 0; background: none; outline: 0; }
.tsearch input::placeholder { color: #333; opacity: 1; }
.slot { width: 60px; height: 50px; }
.apps { display: flex; margin-left: 3px; }
.app { width: 52px; margin: 0 5px; border-bottom: 3px solid #76b9ed; }
.app svg { margin-top: 3px; }
.app.multi { border-image: linear-gradient(to right, #76b9ed 78%, #5f92bd 78%) 1; border-width: 0 0 3px; border-style: solid; }
.app.on { width: 62px; margin: 0; background: linear-gradient(to right, #4d626b 92%, #3b4e59 92%); }
.mark { fill: #fff; font: bold 12px "Open Sans", sans-serif; text-anchor: middle; }
.count { fill: #fff; font: bold 13px "Open Sans", sans-serif; text-anchor: middle; }
.tray { display: flex; align-items: center; gap: 11px; margin-left: auto; margin-right: 5px; padding-right: 15px; border-right: 1px solid #5a6478; }
.clock { display: flex; flex-direction: column; align-items: center; width: 76px; margin-left: -2px; line-height: 23px; }
.action { margin-left: 8px; padding-top: 6px; }
```
FILE: app.js
```js
// Cable rows 3-29: seventeen ports on Device 1, then ten on Device 3.
const rows = [];
for (let i = 1; i <= 27; i++) {
  rows.push([
    i <= 17 ? "Device 1" : "Device 3", i <= 17 ? i : i - 17, "interface",
    i <= 23 ? "Device 16" : "Device 22", i <= 23 ? i : i - 23, "interface", "CAT6A"
  ]);
}

const books = [
  {
    title: "Book6  -  Excel", ref: "", sheets: ["Sheet1"],
    letters: "ABCDEFGHIJK", cols: ["", "", "", "", "", "", "", "", "", "", "", "c-rest"],
    keys: ["side_a_device", "side_a_name", "side_a_type", "side_b_device", "side_b_name", "side_b_type", "type", "status", "label", "length", "length_unit", ""],
    heads: ["Side A Device", "Side A Port", "A Type", "Side B Device", "Side B Port", "B Type", "Cable Type", "Status", "Label", "Length", "Length Unit", ""]
  },
  {
    title: "imp...", ref: "A1", sheets: ["device_type", "device", "interfaces", "cables"], inactive: true,
    letters: "ABCDEFG", cols: ["c-181", "c-112", "c-97", "c-180", "c-111", "c-97", "c-111", "c-rest"],
    keys: ["side_a_device", "side_a_name", "side_a_type", "side_b_device", "side_b_name", "side_b_type", "type", "status"],
    heads: ["Side A Device Name", "Side A Port", "A Type", "Side B Device Name", "Side B Port", "B Type", "Cable Type", "Status"]
  }
];

const desktop = document.getElementById("desktop");
for (const book of books) {
  const win = document.getElementById("window-template").content.cloneNode(true).firstElementChild;
  const find = (s) => win.querySelector(s);
  const n = book.cols.length;
  find(".doc").textContent = book.title;
  find(".cellref").value = book.ref;
  find("colgroup").innerHTML = '<col class="c-head">' + book.cols.map((c) => `<col class="${c}">`).join("");
  find("thead").innerHTML = '<tr><th class="corner"><svg width="16" height="16" viewBox="0 0 16 16"><path d="M16 0v16H0z" fill="#b2b2b2"/></svg></th>' +
    book.cols.map((_, i) => `<th>${book.letters[i] || ""}</th>`).join("") + "</tr>";

  const spill = (i) => (!book.inactive && i === 10 ? ' class="spill"' : "");
  const filter = '<button class="filter" aria-label="Filter"><svg width="8" height="5"><use href="#tri"/></svg></button>';
  let html = "<tr><th>1</th>" + book.keys.map((k, i) => `<td${spill(i)}>${k}</td>`).join("") + "</tr>";
  html += '<tr class="heads"><th>2</th>' + book.heads.map((h, i) => `<td${spill(i)}>${h}${book.inactive && i < n - 1 ? filter : ""}</td>`).join("") + "</tr>";
  rows.forEach((row, r) => {
    html += `<tr class="${r % 2 ? "" : "band"}"><th>${r + 3}</th>`;
    for (let i = 0; i < n; i++) html += `<td${i === 1 || i === 4 ? ' class="n"' : ""}>${row[i] ?? ""}</td>`;
    html += "</tr>";
  });
  find("tbody").innerHTML = html;
  find(".sheets").innerHTML = (book.inactive ? '<a class="more" href="#">...</a>' : "") +
    book.sheets.map((s, i) => `<a href="#"${i === book.sheets.length - 1 ? ' class="on"' : ""}>${s}</a>`).join("");

  if (book.inactive) {
    win.classList.add("inactive");
    find("table").classList.add("banded");
    find(".doc").insertAdjacentHTML("beforeend", '<svg width="8" height="5"><use href="#tri"/></svg>');
    find(".cells").insertAdjacentHTML("beforeend", '<div class="ants"></div>');
  } else {
    win.append(document.getElementById("paste-template").content.cloneNode(true));
  }
  desktop.append(win);
}
```
